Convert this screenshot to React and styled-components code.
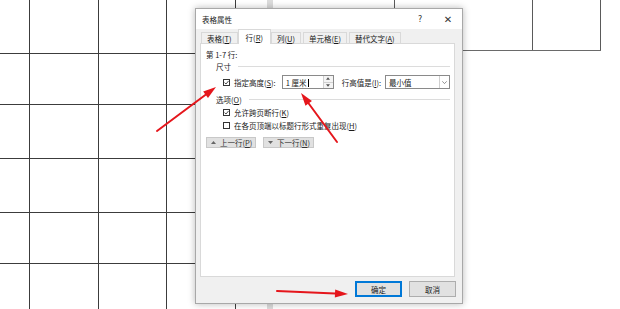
import React from "react";
import styled, { createGlobalStyle } from "styled-components";

const GlobalStyle = createGlobalStyle`
  html, body {
    margin: 0;
    padding: 0;
    background: #fff;
  }
  body {
    font-family: "Noto Sans CJK SC", "Noto Sans", sans-serif;
  }
`;

const Sheet = styled.div`
  position: relative;
  width: 620px;
  height: 309px;
  overflow: hidden;
  background: #fff;
  display: flex;
  align-items: flex-start;
`;

const LeftTable = styled.div`
  display: grid;
  grid-template-columns: 30px 69px 68px 69px;
  grid-template-rows: 54px 51px 54px 54px 51px 60px;
  flex-shrink: 0;
`;

const Cell = styled.div`
  box-sizing: border-box;
  border-right: 1px solid #3c3c3c;
  border-bottom: 1px solid #3c3c3c;
`;

const Gutter = styled.div`
  align-self: stretch;
  width: 6px;
  margin-left: 31px;
  background: #dcdcdc;
  flex-shrink: 0;
`;

const TopRow = styled.div`
  display: flex;
  height: 51px;
  box-sizing: border-box;
  border-bottom: 1px solid #6a6a6a;
`;

const TopCell = styled.div`
  width: ${(p) => p.$w}px;
  box-sizing: border-box;
  border-right: 1px solid #5a5a5a;
`;

const Dialog = styled.div`
  position: absolute;
  left: 195px;
  top: 8px;
  width: 268px;
  height: 296px;
  box-sizing: border-box;
  background: #f0f0f0;
  border: 1px solid #a8a8a8;
  box-shadow: 0 0 7px rgba(0, 0, 0, 0.28);
  display: flex;
  flex-direction: column;
  font-size: 7.5px;
  color: #1a1a1a;
`;

const TitleBar = styled.div`
  height: 20px;
  background: #fff;
  display: flex;
  align-items: center;
  padding-left: 6px;
`;

const Title = styled.span`
  flex: 1;
`;

const TitleButton = styled.span`
  width: 28px;
  text-align: center;
  font-family: "DejaVu Sans", sans-serif;
  font-size: ${(p) => p.$size || 8}px;
  color: #333;
`;

const TabStrip = styled.div`
  display: flex;
  align-items: flex-end;
  height: 14px;
  padding-left: 4px;
`;

const Tab = styled.div`
  box-sizing: border-box;
  height: ${(p) => (p.$active ? 15 : 11)}px;
  padding: 0 ${(p) => (p.$active ? 7 : 5)}px;
  margin: 0 ${(p) => (p.$active ? -1 : 1)}px;
  margin-bottom: ${(p) => (p.$active ? -1 : 0)}px;
  background: ${(p) => (p.$active ? "#fff" : "#f0f0f0")};
  border: 1px solid #d9d9d9;
  border-bottom: none;
  display: flex;
  align-items: center;
  white-space: nowrap;
  position: relative;
  z-index: ${(p) => (p.$active ? 2 : 1)};
`;

const Panel = styled.div`
  height: 234px;
  margin: 0 7px 0 4px;
  background: #fff;
  border: 1px solid #d9d9d9;
  box-sizing: border-box;
  padding: 5px 0 0 5px;
  display: flex;
  flex-direction: column;
`;

const GroupTitle = styled.div`
  display: flex;
  align-items: center;
  gap: 7px;
  margin: ${(p) => p.$mt}px 4px 0 10px;
  height: 10px;
  white-space: nowrap;
  &::after {
    content: "";
    flex: 1;
    height: 1px;
    background: #dcdcdc;
  }
`;

const Row = styled.div`
  display: flex;
  align-items: center;
  height: ${(p) => p.$h || 13}px;
  margin-top: ${(p) => p.$mt || 0}px;
  padding-left: ${(p) => p.$pl ?? 17}px;
  gap: ${(p) => p.$gap || 0}px;
  white-space: nowrap;
`;

const Box = styled.span`
  width: 7px;
  height: 7px;
  box-sizing: border-box;
  border: 1px solid #333;
  background: #fff;
  display: inline-flex;
  align-items: center;
  justify-content: center;
  margin-right: 4px;
  flex-shrink: 0;
`;

const Field = styled.div`
  box-sizing: border-box;
  width: ${(p) => p.$w}px;
  height: 14px;
  border: 1px solid #8a8a8a;
  background: #fff;
  display: flex;
  align-items: center;
  margin-left: ${(p) => p.$ml || 0}px;
`;

const FieldText = styled.span`
  flex: 1;
  padding-left: 3px;
`;

const Caret = styled.span`
  display: inline-block;
  width: 1px;
  height: 8px;
  background: #000;
  vertical-align: middle;
  margin-left: 1px;
`;

const Spinner = styled.div`
  width: 9px;
  align-self: stretch;
  display: flex;
  flex-direction: column;
  border-left: 1px solid #d0d0d0;
`;

const SpinPart = styled.div`
  flex: 1;
  background: #f4f4f4;
  display: flex;
  align-items: center;
  justify-content: center;
  &:first-child {
    border-bottom: 1px solid #d0d0d0;
  }
`;

const DropArrow = styled.div`
  width: 9px;
  align-self: stretch;
  border-left: 1px solid #d0d0d0;
  display: flex;
  align-items: center;
  justify-content: center;
`;

const Label = styled.span`
  margin-left: ${(p) => p.$ml || 0}px;
  white-space: nowrap;
`;

const SmallButton = styled.div`
  box-sizing: border-box;
  height: 11px;
  width: ${(p) => p.$w}px;
  background: #e1e1e1;
  border: 1px solid #c8c8c8;
  display: flex;
  align-items: center;
  padding-left: 4px;
  gap: 4px;
  color: #333;
  white-space: nowrap;
`;

const Footer = styled.div`
  flex: 1;
  display: flex;
  justify-content: flex-end;
  align-items: center;
  gap: 7px;
  padding-right: 6px;
  padding-bottom: 2px;
`;

const DialogButton = styled.div`
  box-sizing: border-box;
  width: 47px;
  height: 16px;
  background: #e1e1e1;
  border: 1px solid ${(p) => (p.$primary ? "#0078d7" : "#adadad")};
  box-shadow: ${(p) => (p.$primary ? "inset 0 0 0 1px #0078d7" : "none")};
  display: flex;
  align-items: center;
  justify-content: center;
`;

const Overlay = styled.svg`
  position: absolute;
  left: 0;
  top: 0;
  pointer-events: none;
`;

const Key = ({ k }) => (
  <>
    (<u>{k}</u>)
  </>
);

const Check = () => (
  <svg width="5" height="5" viewBox="0 0 5 5">
    <path d="M0.5 2.6 L2 4 L4.6 0.9" fill="none" stroke="#222" strokeWidth="0.8" />
  </svg>
);

const Tri = ({ up, color = "#555", w = 5 }) => (
  <svg width={w} height="3" viewBox="0 0 5 3">
    <path d={up ? "M0 3 L2.5 0 L5 3 Z" : "M0 0 L2.5 3 L5 0 Z"} fill={color} />
  </svg>
);

const arrows = [
  { x1: 157, y1: 131, bx: 205.6, by: 94.8, tip: "216,87 207.97,97.98 203.19,91.56" },
  { x1: 337, y1: 142, bx: 308.7, by: 103.5, tip: "301,93 311.92,101.11 305.48,105.85" },
  { x1: 277, y1: 291, bx: 335, by: 293.45, tip: "348,294 334.84,297.45 335.18,289.45" },
];

const tabs = [
  { t: "表格", k: "T" },
  { t: "行", k: "R", active: true },
  { t: "列", k: "U" },
  { t: "单元格", k: "E" },
  { t: "替代文字", k: "A" },
];

export default function App() {
  return (
    <>
      <GlobalStyle />
      <Sheet>
        <LeftTable>
          {Array.from({ length: 24 }).map((_, i) => (
            <Cell key={i} />
          ))}
        </LeftTable>
        <Gutter />
        <TopRow>
          <TopCell $w={122} />
          <TopCell $w={138} />
          <TopCell $w={68} />
        </TopRow>

        <Dialog>
          <TitleBar>
            <Title>表格属性</Title>
            <TitleButton $size={8}>?</TitleButton>
            <TitleButton $size={10}>✕</TitleButton>
          </TitleBar>
          <TabStrip>
            {tabs.map((tab) => (
              <Tab key={tab.k} $active={tab.active}>
                <span>
                  {tab.t}
                  <Key k={tab.k} />
                </span>
              </Tab>
            ))}
          </TabStrip>
          <Panel>
            <Row $pl={0} $h={11}>第 1-7 行:</Row>
            <GroupTitle $mt={1}>
              <span>尺寸</span>
            </GroupTitle>
            <Row $mt={4} $h={14}>
              <Box>
                <Check />
              </Box>
              <Label>
                指定高度<Key k="S" />:
              </Label>
              <Field $w={52} $ml={6}>
                <FieldText>
                  1 厘米
                  <Caret />
                </FieldText>
                <Spinner>
                  <SpinPart>
                    <Tri up w={4} />
                  </SpinPart>
                  <SpinPart>
                    <Tri w={4} />
                  </SpinPart>
                </Spinner>
              </Field>
              <Label $ml={8}>
                行高值是<Key k="I" />:
              </Label>
              <Field $w={65} $ml={4}>
                <FieldText>最小值</FieldText>
                <DropArrow>
                  <svg width="5" height="3" viewBox="0 0 5 3">
                    <path d="M0.3 0.3 L2.5 2.6 L4.7 0.3" fill="none" stroke="#666" strokeWidth="0.7" />
                  </svg>
                </DropArrow>
              </Field>
            </Row>
            <GroupTitle $mt={5}>
              <span>
                选项<Key k="O" />
              </span>
            </GroupTitle>
            <Row $mt={2}>
              <Box>
                <Check />
              </Box>
              <Label>
                允许跨页断行<Key k="K" />
              </Label>
            </Row>
            <Row>
              <Box />
              <Label>
                在各页顶端以标题行形式重复出现<Key k="H" />
              </Label>
            </Row>
            <Row $pl={0} $mt={5} $gap={7} $h={11}>
              <SmallButton $w={50}>
                <Tri up color="#666" />
                <Label>
                  上一行<Key k="P" />
                </Label>
              </SmallButton>
              <SmallButton $w={51}>
                <Tri color="#666" />
                <Label>
                  下一行<Key k="N" />
                </Label>
              </SmallButton>
            </Row>
          </Panel>
          <Footer>
            <DialogButton $primary>确定</DialogButton>
            <DialogButton>取消</DialogButton>
          </Footer>
        </Dialog>

        <Overlay width="620" height="309" viewBox="0 0 620 309">
          {arrows.map((a, i) => (
            <g key={i}>
              <line
                x1={a.x1}
                y1={a.y1}
                x2={a.bx}
                y2={a.by}
                stroke="#e5161c"
                strokeWidth="2"
                strokeLinecap="round"
              />
              <polygon points={a.tip} fill="#e5161c" />
            </g>
          ))}
        </Overlay>
      </Sheet>
    </>
  );
}
